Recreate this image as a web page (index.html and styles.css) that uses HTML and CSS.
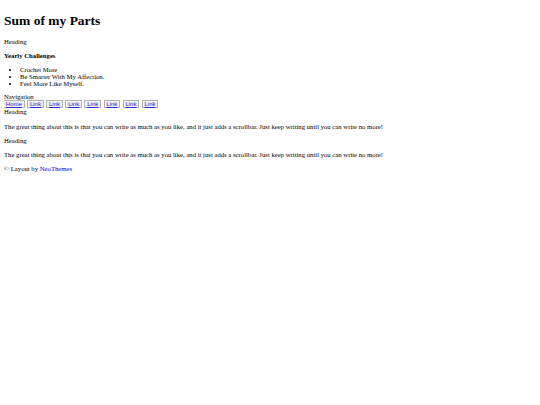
FILE: index.html
```html
<!DOCTYPE html>
<html lang="en">
<head>
    <meta charset="UTF-8">
    <title>Sum of my Parts</title>
    <link rel="stylesheet" href="styles.css">
</head>
<body>
    <h1>Sum of my Parts</h1>
    <div class="sidebar">
        <div class="heading">Heading</div>
        <h4>Yearly Challenges</h4>
        <ul>
            <li>Crochet More</li>
            <li>Be Smarter With My Affection.</li>
            <li>Feel More Like Myself.</li>
        </ul>
    </div>
    <div class="nav-title">Navigation</div>
    <nav class="nav">
        <a href="#">Home</a>
        <a href="#">Link</a>
        <a href="#">Link</a>
        <a href="#">Link</a>
        <a href="#">Link</a>
        <a href="#">Link</a>
        <a href="#">Link</a>
        <a href="#">Link</a>
    </nav>
    <div class="post">
        <div class="heading">Heading</div>
        <p>The great thing about this is that you can write as much as you like, and it just adds a scrollbar. Just keep writing until you can write no more!</p>
        <div class="heading">Heading</div>
        <p>The great thing about this is that you can write as much as you like, and it just adds a scrollbar. Just keep writing until you can write no more!</p>
    </div>
    <div class="footer">&copy; Layout by <a href="#">NeoThemes</a></div>
</body>
</html>
```

FILE: styles.css
```css
body {
    margin: 4px;
    font-family: "Liberation Serif", "Times New Roman", serif;
    font-size: 6.7px;
    color: #000;
}

h1 {
    font-size: 13.5px;
    margin: 9px 0 9px;
}

h4 {
    font-size: 6.7px;
    margin: 6.7px 0 7.2px;
}

ul {
    margin: 7.2px 0 6px;
    padding-left: 16px;
}

.post p {
    margin: 7.2px 0;
}

.nav {
    display: flex;
    gap: 2.5px;
    height: 8.5px;
    padding-top: 0.5px;
    box-sizing: border-box;
    margin-left: -1px;
}

.nav a {
    font-family: "Liberation Sans", Arial, sans-serif;
    font-size: 6px;
    line-height: 6px;
    height: 8px;
    box-sizing: border-box;
    color: #2a2ad0;
    border: 1px solid #b0b0b0;
    box-shadow: inset 0 0 0 0.5px #fff;
    background: #ebebeb;
    padding: 0 1.8px;
}

a {
    color: #0000ee;
}
```
